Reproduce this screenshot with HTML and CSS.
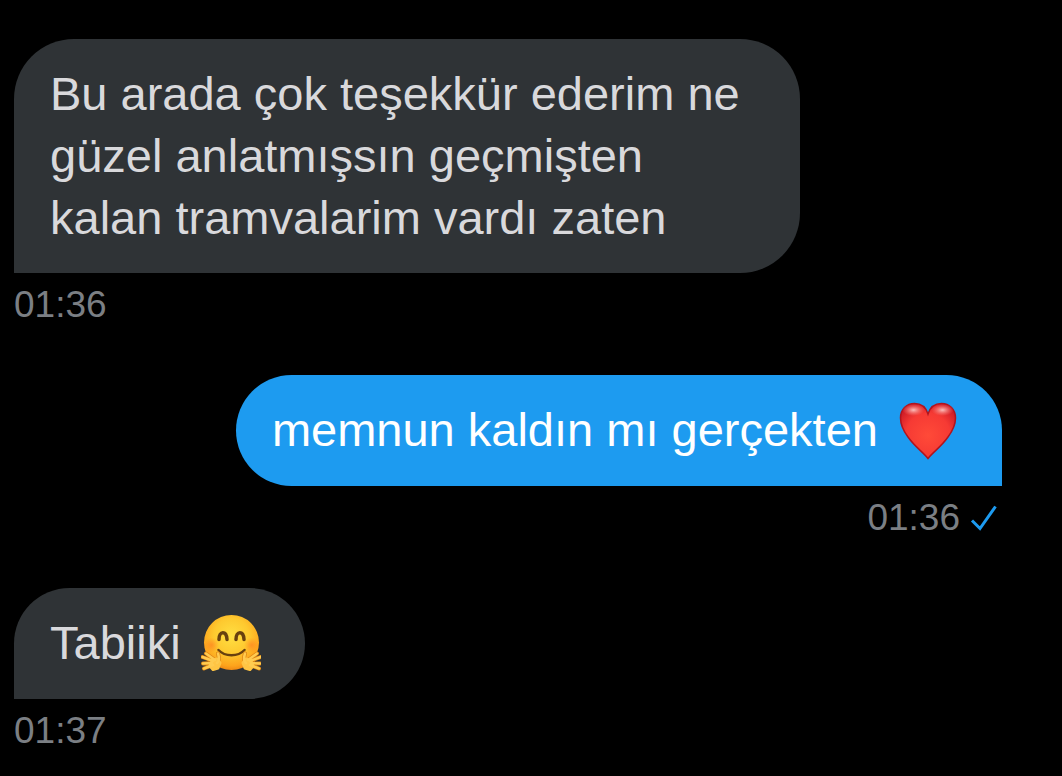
FILE: index.html
```html
<!DOCTYPE html>
<html lang="tr">
  <head>
    <meta charset="utf-8">
    <title>Mesajlar</title>
    <link rel="stylesheet" href="styles.css">
  </head>
  <body>
    <main class="conversation">
      <div class="message received">
        <div class="bubble">Bu arada çok teşekkür ederim ne güzel anlatmışsın geçmişten kalan tramvalarim vardı zaten</div>
        <div class="meta"><time>01:36</time></div>
      </div>

      <div class="message sent">
        <div class="bubble">
          memnun kaldın mı gerçekten
          <svg class="emoji" viewBox="0 0 60 60" role="img" aria-label="kalp">
            <defs>
              <radialGradient id="heart-fill" cx="50%" cy="58%" r="62%">
                <stop offset="0" stop-color="#ff4a38"></stop>
                <stop offset="0.65" stop-color="#f63a34"></stop>
                <stop offset="1" stop-color="#cf1c27"></stop>
              </radialGradient>
              <radialGradient id="heart-shine">
                <stop offset="0" stop-color="#ffd0cc" stop-opacity="0.9"></stop>
                <stop offset="1" stop-color="#ff8a80" stop-opacity="0"></stop>
              </radialGradient>
            </defs>
            <path d="M30 57.500C25 51 17 46 10 36C5.500 30 2.500 24 2.500 17C2.500 8.500 8.500 2.500 16.500 2.500C23 2.500 28 6.500 30 13C32 6.500 37 2.500 43.500 2.500C51.500 2.500 57.500 8.500 57.500 17C57.500 24 54.500 30 50 36C43 46 35 51 30 57.500Z" fill="url(#heart-fill)" stroke="#b0141e" stroke-width="1.500"></path>
            <ellipse cx="15.500" cy="9" rx="11" ry="6" fill="url(#heart-shine)"></ellipse>
            <ellipse cx="44.500" cy="9" rx="11" ry="6" fill="url(#heart-shine)"></ellipse>
          </svg>
        </div>
        <div class="meta">
          <time>01:36</time>
          <svg class="check" viewBox="0 0 28 28" role="img" aria-label="Görüldü">
            <path d="M2 16.500L10 24.500L25.500 2.500"></path>
          </svg>
        </div>
      </div>

      <div class="message received">
        <div class="bubble">
          Tabiiki
          <svg class="emoji" viewBox="0 0 60 60" role="img" aria-label="sarılan yüz">
            <defs>
              <radialGradient id="face-fill" cx="50%" cy="38%" r="64%">
                <stop offset="0" stop-color="#ffdf42"></stop>
                <stop offset="0.5" stop-color="#fec92f"></stop>
                <stop offset="0.85" stop-color="#fda31c"></stop>
                <stop offset="1" stop-color="#ed8412"></stop>
              </radialGradient>
              <radialGradient id="cheek">
                <stop offset="0" stop-color="#ff6a1c" stop-opacity="0.5"></stop>
                <stop offset="1" stop-color="#ff6a1c" stop-opacity="0"></stop>
              </radialGradient>
              <g id="hand">
                <path d="M12 51L3 54.500M11 49L2 49.500M12 47L1.500 43M14 46L5 39.500M16 49C19 46 18 43 17 39.500" stroke="#dd8514" stroke-width="4"></path>
                <path d="M11 47L16 45L19 49L17 54L12 55.500L9 52Z" fill="#ffc544" stroke="#ffc544" stroke-width="3"></path>
                <path d="M12 51L3 54.500M11 49L2 49.500M12 47L1.500 43M14 46L5 39.500M16 49C19 46 18 43 17 39.500" stroke="#ffcb50" stroke-width="2.500"></path>
              </g>
            </defs>
            <circle cx="30.500" cy="28.500" r="27.500" fill="url(#face-fill)"></circle>
            <circle cx="10.500" cy="31" r="7.500" fill="url(#cheek)"></circle>
            <circle cx="50.500" cy="31" r="7.500" fill="url(#cheek)"></circle>
            <g fill="none" stroke="#68400f" stroke-linecap="round" stroke-width="3.500">
              <path d="M18 25.500C18 16.500 25.500 16.500 26 25.500"></path>
              <path d="M35 25.500C35 16.500 42.500 16.500 43 25.500"></path>
              <path d="M17.500 36C24 43 37 43 43.500 36" stroke-width="2.500"></path>
            </g>
            <g fill="none" stroke-linecap="round" stroke-linejoin="round">
              <use href="#hand"></use>
              <use href="#hand" transform="translate(61 0) scale(-1 1)"></use>
            </g>
          </svg>
        </div>
        <div class="meta"><time>01:37</time></div>
      </div>
    </main>
  </body>
</html>
```
FILE: styles.css
```css
body {
  margin: 0;
  background-color: #000;
  color: #d9d9dc;
  font-family: "Liberation Sans", Arial, sans-serif;
  font-size: 47px;
  line-height: 62px;
}
.conversation {
  display: flex;
  flex-direction: column;
  gap: 46px;
  padding: 39px 60px 0 14px;
}
.message {
  display: flex;
  flex-direction: column;
  align-items: flex-start;
}
.bubble {
  box-sizing: border-box;
  max-width: 786px;
  min-height: 111px;
  padding: 24px 36px;
  border-radius: 60px;
  border-bottom-left-radius: 0;
  background-color: #2f3336;
}
.sent {
  align-items: flex-end;
}
.sent .bubble {
  border-bottom-left-radius: 60px;
  border-bottom-right-radius: 0;
  background-color: #1d9bf0;
  color: #fff;
}
.emoji {
  width: 60px;
  height: 60px;
  margin: -6px 8px 0 7px;
  vertical-align: middle;
}
.meta {
  display: flex;
  align-items: center;
  gap: 10px;
  padding: 8px 4px 0 0;
  color: #7b7f84;
  font-size: 37px;
  line-height: 48px;
}
.check {
  width: 28px;
  height: 28px;
  fill: none;
  stroke: #1d9bf0;
  stroke-width: 3;
}
```
